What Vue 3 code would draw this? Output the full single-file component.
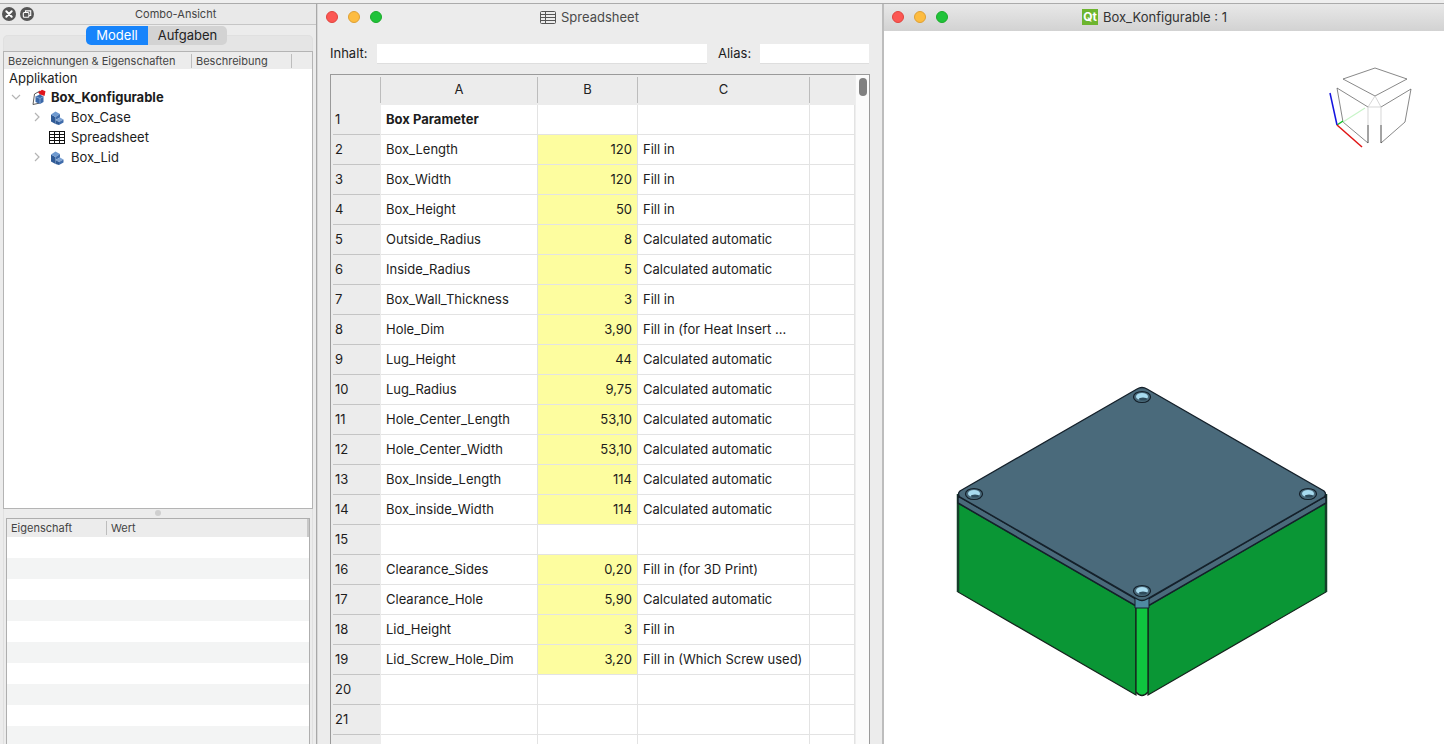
<script setup>
const rows = [
  ['Box Parameter', '', ''],
  ['Box_Length', '120', 'Fill in'],
  ['Box_Width', '120', 'Fill in'],
  ['Box_Height', '50', 'Fill in'],
  ['Outside_Radius', '8', 'Calculated automatic'],
  ['Inside_Radius', '5', 'Calculated automatic'],
  ['Box_Wall_Thickness', '3', 'Fill in'],
  ['Hole_Dim', '3,90', 'Fill in (for Heat Insert ...'],
  ['Lug_Height', '44', 'Calculated automatic'],
  ['Lug_Radius', '9,75', 'Calculated automatic'],
  ['Hole_Center_Length', '53,10', 'Calculated automatic'],
  ['Hole_Center_Width', '53,10', 'Calculated automatic'],
  ['Box_Inside_Length', '114', 'Calculated automatic'],
  ['Box_inside_Width', '114', 'Calculated automatic'],
  ['', '', ''],
  ['Clearance_Sides', '0,20', 'Fill in (for 3D Print)'],
  ['Clearance_Hole', '5,90', 'Calculated automatic'],
  ['Lid_Height', '3', 'Fill in'],
  ['Lid_Screw_Hole_Dim', '3,20', 'Fill in (Which Screw used)'],
  ['', '', ''],
  ['', '', ''],
  ['', '', ''],
]
const propRows = Array.from({ length: 10 }, (_, i) => i)
const holes = [
  [1142, 397],
  [974, 494],
  [1308, 494],
  [1142, 591],
]
</script>

<template>
  <div class="screen">
    <div class="topline"></div>
    <div class="windows">
      <aside class="combo">
        <div class="combo-title">
          <span class="round-btn">
            <svg width="14" height="14" viewBox="0 0 14 14"><path d="M4.3 4.3l5.4 5.4M9.7 4.3l-5.4 5.4" stroke="#fff" stroke-width="2" stroke-linecap="round"/></svg>
          </span>
          <span class="round-btn">
            <svg width="14" height="14" viewBox="0 0 14 14" fill="none" stroke="#fff" stroke-width="1.1"><rect x="3.3" y="5.5" width="5.6" height="4.8" rx="1"/><path d="M5.5 5.3V3.9h5.2v4.6H9.1"/></svg>
          </span>
          <span class="combo-name">Combo-Ansicht</span>
        </div>
        <div class="tabs">
          <span class="tab active">Modell</span>
          <span class="tab">Aufgaben</span>
        </div>
        <div class="pane">
          <div class="tree">
            <div class="tree-head">
              <span class="th-a">Bezeichnungen &amp; Eigenschaften</span>
              <span class="th-b">Beschreibung</span>
            </div>
            <div class="tree-root">Applikation</div>
            <div class="tree-row doc">
              <svg class="chev" width="10" height="6" viewBox="0 0 10 6" fill="none" stroke="#b4b4b4" stroke-width="1.2"><path d="M1 1l4 4 4-4"/></svg>
              <svg class="doc-icon" width="14" height="16" viewBox="0 0 14 16">
                <path d="M1 15.500L2.500 5 8 2v12z" fill="#fff" stroke="#333" stroke-width=".8"/>
                <path d="M3.500 7.500L8 5.500l3.500 2v5.500L8 15l-4.500-2z" fill="#3a68a8"/>
                <path d="M3.500 7.500L8 9.500l3.500-2M8 9.500V15" fill="none" stroke="#8fb0dc" stroke-width=".8"/>
                <path d="M6 3.500L10 .8l3.500 1.500L12.500 7 8.500 5.500z" fill="#e0141c"/>
              </svg>
              <b>Box_Konfigurable</b>
            </div>
            <div class="tree-row child">
              <svg class="chev-r" width="6" height="10" viewBox="0 0 6 10" fill="none" stroke="#b4b4b4" stroke-width="1.2"><path d="M1 1l4 4-4 4"/></svg>
              <svg class="part" width="14" height="15" viewBox="0 0 14 15">
                <path d="M1 4.500L5.500 7V14L1 11.500Z" fill="#2f5a96"/>
                <path d="M1 4.500L5.500 1.500 10 4 5.500 7Z" fill="#6f9ad0"/>
                <path d="M5.500 7L10 4V7.500L5.500 10Z" fill="#3f6cab"/>
                <path d="M5.500 10L10 7.500 13.500 9.500 9 12Z" fill="#7fa4d4"/>
                <path d="M5.500 10L9 12V15L5.500 14Z" fill="#2f5a96"/>
                <path d="M9 12L13.500 9.500V12.500L9 15Z" fill="#3f6cab"/>
              </svg>
              <span>Box_Case</span>
            </div>
            <div class="tree-row child">
              <span class="chev-gap"></span>
              <svg class="grid-icon" width="16" height="13" viewBox="0 0 16 13" fill="none" stroke="#111" stroke-width="1"><rect x=".5" y=".5" width="15" height="12"/><path d="M.5 3.500h15M.5 6.500h15M.5 9.500h15M5.500.5v12M10.500.5v12"/></svg>
              <span>Spreadsheet</span>
            </div>
            <div class="tree-row child">
              <svg class="chev-r" width="6" height="10" viewBox="0 0 6 10" fill="none" stroke="#b4b4b4" stroke-width="1.2"><path d="M1 1l4 4-4 4"/></svg>
              <svg class="part" width="14" height="15" viewBox="0 0 14 15">
                <path d="M1 4.500L5.500 7V14L1 11.500Z" fill="#2f5a96"/>
                <path d="M1 4.500L5.500 1.500 10 4 5.500 7Z" fill="#6f9ad0"/>
                <path d="M5.500 7L10 4V7.500L5.500 10Z" fill="#3f6cab"/>
                <path d="M5.500 10L10 7.500 13.500 9.500 9 12Z" fill="#7fa4d4"/>
                <path d="M5.500 10L9 12V15L5.500 14Z" fill="#2f5a96"/>
                <path d="M9 12L13.500 9.500V12.500L9 15Z" fill="#3f6cab"/>
              </svg>
              <span>Box_Lid</span>
            </div>
          </div>
          <div class="splitter"><span class="split-dot"></span></div>
          <div class="props-wrap">
            <div class="props">
              <div class="props-head">
                <span class="ph-a">Eigenschaft</span>
                <span class="ph-b">Wert</span>
              </div>
              <div v-for="i in propRows" :key="i" class="prop-row" :class="{ alt: i % 2 === 1 }"></div>
            </div>
          </div>
        </div>
      </aside>

      <section class="sheet">
        <header class="mac-title">
          <div class="lights">
            <i class="red"></i><i class="amber"></i><i class="green"></i>
          </div>
          <div class="sheet-name">
            <svg width="16" height="13" viewBox="0 0 16 13" fill="none" stroke="#555" stroke-width="1"><rect x=".5" y=".5" width="15" height="12" rx="1"/><path d="M.5 3.500h15M.5 6.500h15M.5 9.500h15M5.500.5v12"/></svg>
            <span>Spreadsheet</span>
          </div>
        </header>
        <div class="form">
          <label class="l1">Inhalt:</label>
          <div class="input in1"></div>
          <label class="l2">Alias:</label>
          <div class="input in2"></div>
        </div>
        <div class="table">
          <div class="table-main">
            <div class="gr head">
              <div class="hc"></div>
              <div class="hc">A</div>
              <div class="hc">B</div>
              <div class="hc">C</div>
              <div class="hc last"></div>
            </div>
            <div v-for="(r, i) in rows" :key="i" class="gr row">
              <div class="num"><span>{{ i < 21 ? i + 1 : '' }}</span></div>
              <div class="cell" :class="{ bold: i === 0 }">{{ r[0] }}</div>
              <div class="cell val" :class="{ yellow: r[1] !== '' }">{{ r[1] }}</div>
              <div class="cell">{{ r[2] }}</div>
              <div class="cell"></div>
            </div>
          </div>
          <div class="scroll"><span class="thumb"></span></div>
        </div>
      </section>

      <section class="viewer">
        <header class="mac-title view-title">
          <div class="lights">
            <i class="red"></i><i class="amber"></i><i class="green"></i>
          </div>
          <div class="view-name">
            <span class="qt">Qt</span>
            <span>Box_Konfigurable : 1</span>
          </div>
        </header>
        <svg class="canvas" width="560" height="713" viewBox="884 31 560 713">
          <!-- navigation cube -->
          <g fill="none" stroke="#555" stroke-width=".7">
            <path d="M1375 68L1407 79 1375 96 1343 79Z"/>
            <path d="M1337 88L1368 107M1343 122L1368 143M1337 88L1343 122"/>
            <path d="M1411 89L1381 107M1405 122L1381 143M1411 89L1405 122"/>
            <path d="M1368 125V143M1381 125V143" stroke="#333" stroke-width=".9"/>
            <path d="M1368 107V125M1381 107V125M1368 107L1375 96 1381 107H1368" stroke="#c4c4c4"/>
          </g>
          <path d="M1343 122L1365 108" stroke="#c8f5c8" stroke-width="1.200"/>
          <path d="M1337 125L1343 121" stroke="#12c02a" stroke-width="1.500"/>
          <path d="M1337 125L1330 93" stroke="#1414e0" stroke-width="1.500"/>
          <path d="M1337 125L1362 147" stroke="#e01414" stroke-width="1.500"/>

          <!-- box body -->
          <path d="M958 503L1136 606V695L958 592Z" fill="#0a9635" stroke="#14241c" stroke-width="1.200"/>
          <path d="M1148 606L1326 503V592L1148 695Z" fill="#0a9635" stroke="#14241c" stroke-width="1.200"/>
          <path d="M1136 606H1148V692Q1142 699 1136 692Z" fill="#0fc53f" stroke="#14241c" stroke-width="1.300"/>
          <path d="M958 494V592M1326 494V592" stroke="#14402a" stroke-width="2.500"/>
          <!-- lid -->
          <path d="M958 496L1136 599V606L958 503ZM1326 496L1148 599V606L1326 503Z" fill="#4a6a7b" stroke="#14202a" stroke-width="1.500"/>
          <path d="M1135 598H1149V608H1135Z" fill="#4f8aa2" stroke="#14202a" stroke-width="1"/>
          <path d="M1137 389Q1142 386 1147 389L1324 491Q1327 494 1324 497L1147 599Q1142 602 1137 599L960 497Q957 494 960 491Z" fill="#4a6a7b" stroke="#14202a" stroke-width="1.300"/>
          <g v-for="h in holes" :key="h[0] + '-' + h[1]">
            <ellipse :cx="h[0]" :cy="h[1]" rx="8.500" ry="5.500" fill="#4a6a7b" stroke="#14202a" stroke-width="1.200"/>
            <ellipse :cx="h[0]" :cy="h[1] - 0.5" rx="6" ry="3.600" fill="#a8dbef"/>
            <ellipse :cx="h[0] + 1" :cy="h[1] + 2" rx="4" ry="1.500" fill="#2f4c5c"/>
          </g>
        </svg>
      </section>
    </div>
  </div>
</template>

<style scoped>
.screen {
  width: 1444px;
  height: 744px;
  overflow: hidden;
  display: flex;
  flex-direction: column;
  background: #d8d8d8;
  font-family: Inter, "Liberation Sans", sans-serif;
  font-size: 13px;
  color: #1c1c1c;
}
.topline {
  height: 3px;
  flex: none;
  background: #efefef;
  border-bottom: 1px solid #ababab;
}
.windows {
  flex: 1;
  display: flex;
  min-height: 0;
}
.combo {
  width: 316px;
  flex: none;
  background: #ececec;
  border-right: 1px solid #a8a8a8;
  box-sizing: content-box;
  overflow: hidden;
}
.combo-title {
  height: 20px;
  display: flex;
  align-items: center;
  gap: 4px;
  padding-left: 2px;
  border-bottom: 1px solid #c6c6c6;
  background: #e9e9e9;
  position: relative;
}
.round-btn {
  width: 14px;
  height: 14px;
  border-radius: 50%;
  background: #555;
  display: block;
}
.round-btn svg {
  display: block;
}
.combo-name {
  margin-left: 97px;
  font-size: 11px;
  color: #444;
}
.tabs {
  display: flex;
  margin: 1px 0 0 86px;
  height: 19px;
  position: relative;
  z-index: 1;
}
.tab {
  width: 79px;
  background: #d3d3d3;
  border-radius: 0 5px 5px 0;
  text-align: center;
  line-height: 19px;
  color: #222;
}
.tab.active {
  width: 62px;
  background: #1784fb;
  color: #fff;
  border-radius: 5px 0 0 5px;
}
.pane {
  margin: -10px 3px 0 3px;
  padding-top: 16px;
  border-radius: 5px 5px 0 0;
  background: linear-gradient(#e5e5e5 0, #e5e5e5 16px, #ececec 16px);
  box-shadow: 0 0 0 1px #e0e0e0 inset;
}
.tree {
  height: 456px;
  background: #fff;
  border: 1px solid #b4b4b4;
  overflow: hidden;
}
.tree-head {
  height: 17px;
  background: #ececec;
  display: flex;
  align-items: center;
  font-size: 11px;
  color: #444;
}
.th-a {
  width: 188px;
  padding-left: 4px;
  box-sizing: border-box;
  height: 14px;
  line-height: 14px;
  border-right: 1px solid #bdbdbd;
  white-space: nowrap;
}
.th-b {
  width: 100px;
  padding-left: 4px;
  box-sizing: border-box;
  height: 14px;
  line-height: 14px;
  border-right: 1px solid #bdbdbd;
}
.tree-root {
  height: 18px;
  line-height: 18px;
  padding-left: 5px;
}
.tree-row {
  height: 20px;
  display: flex;
  align-items: center;
  white-space: nowrap;
}
.tree-row.doc {
  padding-left: 7px;
}
.chev {
  flex: none;
}
.doc-icon {
  margin: 0 5px 0 11px;
  flex: none;
}
.tree-row.child {
  padding-left: 30px;
}
.chev-r {
  flex: none;
}
.chev-gap {
  width: 6px;
  flex: none;
}
.part {
  margin: 0 7px 0 10px;
  flex: none;
}
.grid-icon {
  margin: 0 6px 0 9px;
  flex: none;
}
.splitter {
  height: 9px;
  display: flex;
  justify-content: center;
  align-items: center;
  padding-bottom: 1px;
  box-sizing: border-box;
}
.split-dot {
  width: 6px;
  height: 6px;
  border-radius: 50%;
  background: #cfcfcf;
}
.props-wrap {
  margin: 0 3px;
}
.props {
  border: 1px solid #aeaeae;
  border-bottom: 0;
  background: #fff;
}
.props-head {
  height: 18px;
  background: #ececec;
  display: flex;
  align-items: center;
  font-size: 11px;
  color: #444;
  border-right: 2px solid #c8c8c8;
}
.ph-a {
  width: 100px;
  height: 14px;
  line-height: 14px;
  padding-left: 4px;
  box-sizing: border-box;
  border-right: 1px solid #bdbdbd;
}
.ph-b {
  padding-left: 4px;
}
.prop-row {
  height: 21px;
}
.prop-row.alt {
  background: #f3f4f4;
}
.sheet {
  width: 565px;
  box-sizing: border-box;
  flex: none;
  margin-left: 1px;
  background: #ececec;
  border-right: 1px solid #bdbdbd;
  overflow: hidden;
  display: flex;
  flex-direction: column;
}
.mac-title {
  height: 26px;
  padding-bottom: 1px;
  flex: none;
  display: flex;
  align-items: center;
}
.lights {
  display: flex;
  gap: 10px;
  padding-left: 8px;
  flex: none;
}
.lights i {
  width: 12px;
  height: 12px;
  border-radius: 50%;
  display: block;
  box-sizing: border-box;
}
.red {
  background: #fc5753;
  border: 1px solid #e0443e;
}
.amber {
  background: #fdbc40;
  border: 1px solid #dea034;
}
.green {
  background: #20c33a;
  border: 1px solid #1aab29;
}
.sheet-name {
  margin-left: 158px;
  display: flex;
  align-items: center;
  gap: 5px;
  color: #4a4a4a;
}
.sheet-name svg {
  display: block;
}
.form {
  height: 43px;
  flex: none;
  display: flex;
  align-items: flex-start;
  padding: 13px 0 0 12px;
  box-sizing: border-box;
}
.form label {
  line-height: 19px;
}
.l1 {
  width: 47px;
}
.l2 {
  width: 42px;
}
.input {
  height: 19px;
  background: #fff;
  box-shadow: 0 1px 0 #dedede;
}
.in1 {
  width: 330px;
  margin-right: 11px;
}
.in2 {
  width: 109px;
}
.table {
  margin-left: 12px;
  width: 540px;
  box-sizing: border-box;
  flex: 1;
  min-height: 0;
  border: 1px solid #9a9a9a;
  border-bottom: 0;
  display: flex;
  overflow: hidden;
  background: #fff;
}
.table-main {
  width: 524px;
  flex: none;
}
.gr {
  display: grid;
  grid-template-columns: 50px 157px 100px 172px 45px;
}
.head {
  height: 30px;
  background: #ececec;
  box-sizing: border-box;
  padding: 2px 0;
}
.hc {
  border-right: 1px solid #bcbcbc;
  text-align: center;
  line-height: 24px;
  color: #222;
}
.hc.last {
  border-right: 0;
}
.row {
  height: 30px;
}
.num {
  background: #ececec;
  padding: 0 1px 0 2px;
  line-height: 29px;
}
.num span {
  display: block;
  height: 30px;
  box-sizing: border-box;
  padding-left: 2px;
  border-bottom: 1px solid #c4c4c4;
}
.cell {
  border-right: 1px solid #e3e3e3;
  border-bottom: 1px solid #e3e3e3;
  padding: 0 5px;
  line-height: 29px;
  white-space: nowrap;
  overflow: hidden;
  box-sizing: border-box;
}
.cell.bold {
  font-weight: 700;
}
.val {
  text-align: right;
}
.yellow {
  background: #fdfd9f;
}
.scroll {
  flex: 1;
  background: #fbfbfb;
  border-left: 1px solid #eee;
  position: relative;
}
.thumb {
  position: absolute;
  left: 3px;
  top: 3px;
  width: 8px;
  height: 18px;
  border-radius: 4px;
  background: #808080;
}
.viewer {
  flex: 1;
  min-width: 0;
  background: #fff;
  border-left: 1px solid #bdbdbd;
  overflow: hidden;
}
.view-title {
  background: linear-gradient(#e8e8e8, #d2d2d2);
}
.view-name {
  margin-left: 134px;
  display: flex;
  align-items: center;
  gap: 5px;
  color: #333;
}
.qt {
  width: 16px;
  height: 16px;
  background: #6db52f;
  color: #fff;
  font-weight: 700;
  font-size: 12px;
  line-height: 16px;
  text-align: center;
  display: block;
}
.canvas {
  display: block;
}
</style>
